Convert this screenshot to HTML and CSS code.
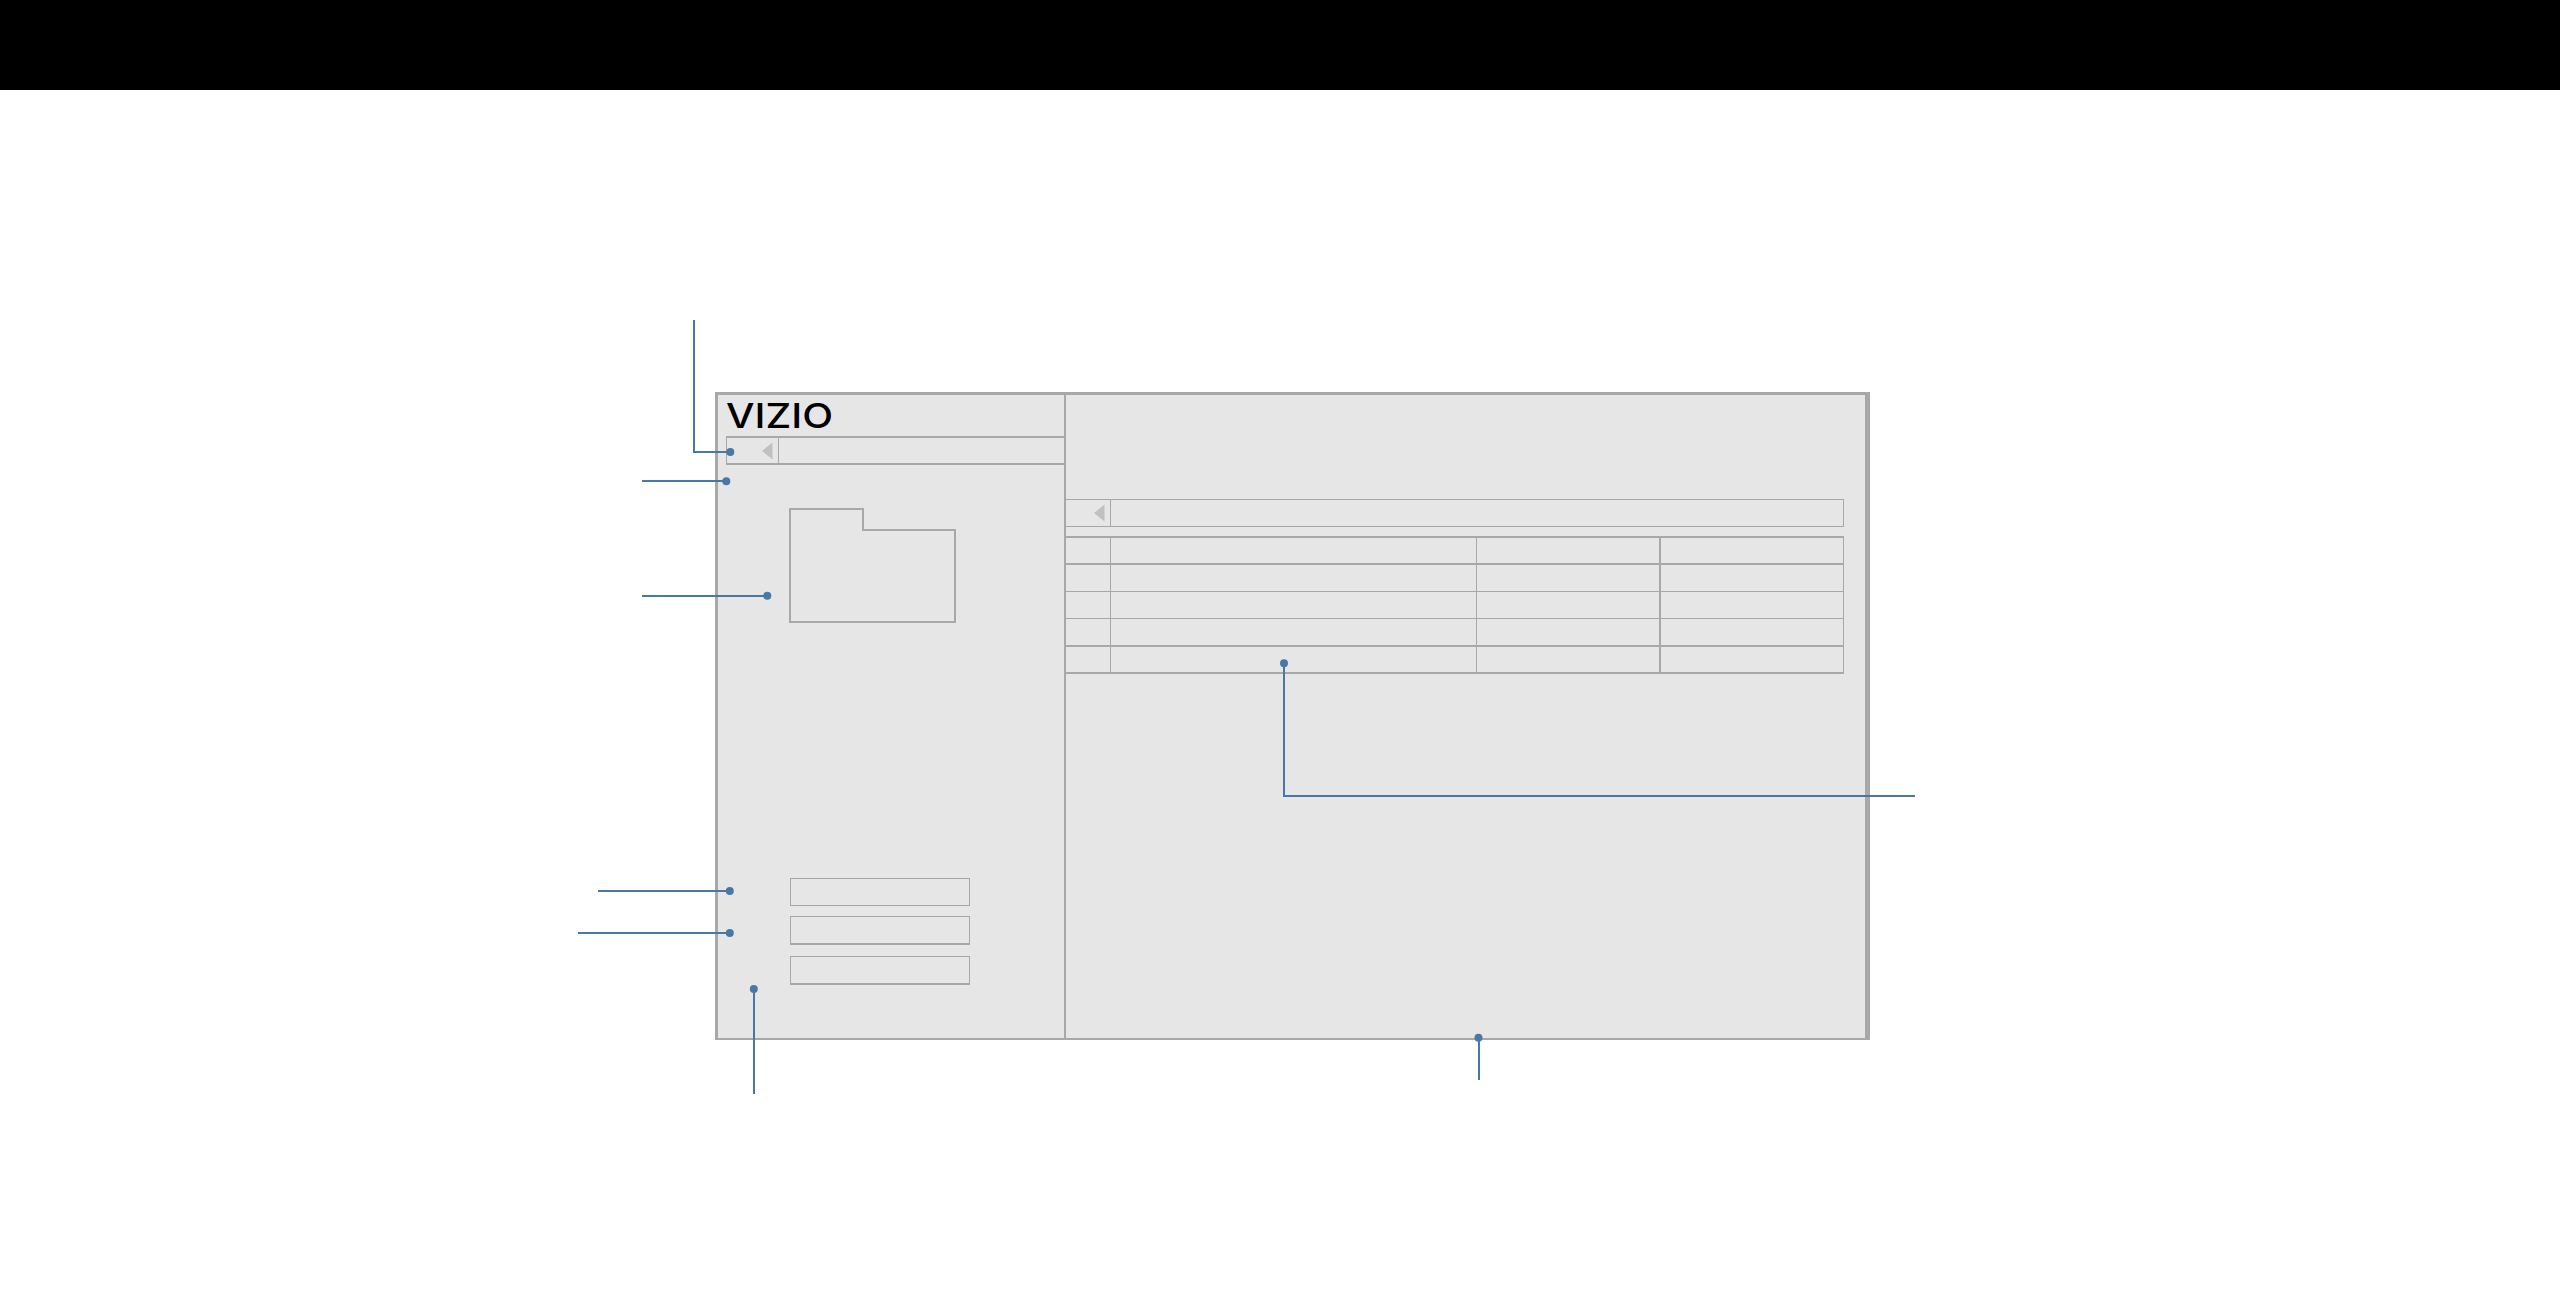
FILE: index.html
```html
<!DOCTYPE html>
<html lang="en">
<head>
    <meta charset="UTF-8">
    <meta name="viewport" content="width=device-width, initial-scale=1.0">
    <title>VIZIO Wireframe</title>
    <link rel="stylesheet" href="styles.css">
</head>
<body>
    <header class="topbar"></header>

    <main class="stage">
        <div class="frame">
            <aside class="sidebar">
                <svg class="logo" width="120" height="41" viewBox="0 0 120 41">
                    <text x="0" y="32.5" textLength="107" lengthAdjust="spacingAndGlyphs">VIZIO</text>
                </svg>
                <div class="path-bar side-path">
                    <div class="back">
                        <svg width="11" height="18" viewBox="0 0 11 18"><path d="M0 9 10.5 0.5V17.5Z"/></svg>
                    </div>
                </div>
                <svg class="folder" width="167" height="115" viewBox="0 0 167 115">
                    <path d="M1 1H74V22H166V114H1Z"/>
                </svg>
                <div class="fields">
                    <div class="field"></div>
                    <div class="field thick"></div>
                    <div class="field thick"></div>
                </div>
            </aside>

            <section class="content">
                <div class="path-bar list-path">
                    <div class="back">
                        <svg width="11" height="18" viewBox="0 0 11 18"><path d="M0 9 10.5 0.5V17.5Z"/></svg>
                    </div>
                </div>
                <div class="list">
                    <div class="row thick"><div></div><div></div><div></div><div></div></div>
                    <div class="row"><div></div><div></div><div></div><div></div></div>
                    <div class="row"><div></div><div></div><div></div><div></div></div>
                    <div class="row thick tall"><div></div><div></div><div></div><div></div></div>
                    <div class="row thick"><div></div><div></div><div></div><div></div></div>
                </div>
            </section>
        </div>
    </main>

    <!-- callout lines over the wireframe -->
    <svg class="callouts" width="2560" height="1308" viewBox="0 0 2560 1308">
        <path d="M694 320V452H730"/>
        <path d="M642 481H726"/>
        <path d="M642 596H767"/>
        <path d="M598 891H730"/>
        <path d="M578 933H730"/>
        <path d="M754 989V1094"/>
        <path d="M1479 1038V1080"/>
        <path d="M1284 663V796H1915"/>
        <circle cx="730.3" cy="452" r="4"/>
        <circle cx="726.3" cy="481.3" r="4"/>
        <circle cx="767.3" cy="595.7" r="4"/>
        <circle cx="729.8" cy="891" r="4"/>
        <circle cx="729.8" cy="933" r="4"/>
        <circle cx="753.8" cy="989" r="4"/>
        <circle cx="1478.5" cy="1037.8" r="4"/>
        <circle cx="1284" cy="663.3" r="4"/>
    </svg>
</body>
</html>
```

FILE: styles.css
```css
* {
    box-sizing: border-box;
}
body {
    margin: 0;
    height: 1308px;
    overflow: hidden;
    background-color: #fff;
    font-family: Inter, "Liberation Sans", sans-serif;
}
svg {
    display: block;
}
.topbar {
    height: 90px;
    background-color: #000;
}
.stage {
    padding: 302px 0 0 715px;
}
.frame {
    display: flex;
    width: 1155px;
    height: 648px;
    border: solid #a8a8a8;
    border-width: 3px 5px 2px 3px;
    background-color: #e6e6e6;
}
.sidebar {
    width: 348px;
    padding-left: 8px;
    border-right: 2px solid #a8a8a8;
}
.logo {
    overflow: visible;
}
.logo text {
    font-size: 34px;
    font-weight: 500;
    fill: #000;
}
.path-bar {
    display: flex;
    border: 1px solid #a8a8a8;
}
.back {
    display: flex;
    align-items: center;
    justify-content: flex-end;
    border-right: 1px solid #a8a8a8;
}
.back path {
    fill: #c0c0c0;
}
.side-path {
    height: 29px;
    border-width: 2px 0 2px 1px;
}
.side-path .back {
    width: 52px;
    padding-right: 5px;
}
.folder {
    margin: 43px 0 0 63px;
}
.folder path {
    fill: none;
    stroke: #a8a8a8;
    stroke-width: 2;
}
.fields {
    display: flex;
    flex-direction: column;
    width: 180px;
    margin: 255px 0 0 64px;
}
.field {
    height: 28px;
    border: 1px solid #a8a8a8;
    margin-bottom: 10px;
}
.field.thick {
    height: 29px;
    border-bottom-width: 2px;
    margin-bottom: 11px;
}
.content {
    flex: 1;
    padding: 104px 21px 0 0;
}
.list-path {
    height: 28px;
    border-left: none;
}
.list-path .back {
    width: 45px;
    padding-right: 5px;
}
.list {
    margin-top: 9px;
    border-top: 2px solid #a8a8a8;
}
.row {
    display: grid;
    grid-template-columns: 45px 366px 184px 183px;
    height: 27px;
    border-bottom: 1px solid #a8a8a8;
}
.row.thick {
    border-bottom-width: 2px;
}
.row.tall {
    height: 28px;
}
.row div {
    border-right: 1px solid #a8a8a8;
}
.row div:nth-child(3) {
    border-right-width: 2px;
}
.callouts {
    position: absolute;
    top: 0;
    left: 0;
}
.callouts path {
    fill: none;
    stroke: #4878a6;
    stroke-width: 2;
}
.callouts circle {
    fill: #4878a6;
}
```
